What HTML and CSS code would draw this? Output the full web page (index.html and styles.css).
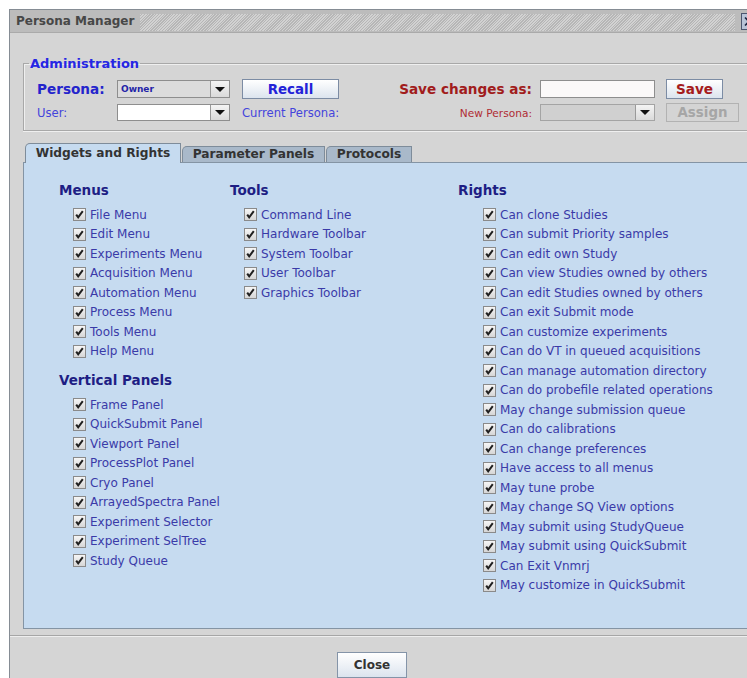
FILE: index.html
```html
<!DOCTYPE html>
<html>
<head>
<meta charset="utf-8">
<title>Persona Manager</title>
<link rel="stylesheet" href="styles.css">
</head>
<body>
<div class="window">
  <div class="titlebar">
    <span class="title">Persona Manager</span>
    <span class="grip"></span>
    <span class="xbtn"><svg width="12" height="13" viewBox="0 0 12 13"><path d="M2 2.5l8 8M10 2.5l-8 8" stroke="#1c2440" stroke-width="1.6" fill="none"/></svg></span>
  </div>

  <div class="content">
    <fieldset class="admin">
      <legend>Administration</legend>
      <div class="admin-grid">
        <span class="lbl-big blue r1 c1">Persona:</span>
        <span class="combo combo-grey r1 c2"><span class="combo-text">Owner</span><span class="arrow"></span></span>
        <button class="btn btn-blue r1 c4">Recall</button>
        <span class="lbl-big red r1 c5 right">Save changes as:</span>
        <span class="field r1 c7"></span>
        <button class="btn btn-red btn-save r1 c9">Save</button>

        <span class="lbl-small blue-light r2 c1">User:</span>
        <span class="combo combo-small r2 c2"><span class="combo-text"></span><span class="arrow"></span></span>
        <span class="lbl-small blue-light r2 c4 span2">Current Persona:</span>
        <span class="lbl-small red-light r2 c5 right">New Persona:</span>
        <span class="combo combo-small combo-off r2 c7"><span class="combo-text"></span><span class="arrow"></span></span>
        <button class="btn btn-off r2 c9">Assign</button>
      </div>
    </fieldset>

    <div class="tabs">
      <div class="tab active tab-w">Widgets and Rights</div>
      <div class="tab tab-p">Parameter Panels</div>
      <div class="tab tab-pr">Protocols</div>
    </div>

    <div class="panel">
      <div class="col">
        <h3>Menus</h3>
        <ul class="list">
          <li><span class="cb"></span>File Menu</li>
          <li><span class="cb"></span>Edit Menu</li>
          <li><span class="cb"></span>Experiments Menu</li>
          <li><span class="cb"></span>Acquisition Menu</li>
          <li><span class="cb"></span>Automation Menu</li>
          <li><span class="cb"></span>Process Menu</li>
          <li><span class="cb"></span>Tools Menu</li>
          <li><span class="cb"></span>Help Menu</li>
        </ul>
        <h3 class="second">Vertical Panels</h3>
        <ul class="list">
          <li><span class="cb"></span>Frame Panel</li>
          <li><span class="cb"></span>QuickSubmit Panel</li>
          <li><span class="cb"></span>Viewport Panel</li>
          <li><span class="cb"></span>ProcessPlot Panel</li>
          <li><span class="cb"></span>Cryo Panel</li>
          <li><span class="cb"></span>ArrayedSpectra Panel</li>
          <li><span class="cb"></span>Experiment Selector</li>
          <li><span class="cb"></span>Experiment SelTree</li>
          <li><span class="cb"></span>Study Queue</li>
        </ul>
      </div>

      <div class="col">
        <h3>Tools</h3>
        <ul class="list">
          <li><span class="cb"></span>Command Line</li>
          <li><span class="cb"></span>Hardware Toolbar</li>
          <li><span class="cb"></span>System Toolbar</li>
          <li><span class="cb"></span>User Toolbar</li>
          <li><span class="cb"></span>Graphics Toolbar</li>
        </ul>
      </div>

      <div class="col">
        <h3>Rights</h3>
        <ul class="list list-wide">
          <li><span class="cb"></span>Can clone Studies</li>
          <li><span class="cb"></span>Can submit Priority samples</li>
          <li><span class="cb"></span>Can edit own Study</li>
          <li><span class="cb"></span>Can view Studies owned by others</li>
          <li><span class="cb"></span>Can edit Studies owned by others</li>
          <li><span class="cb"></span>Can exit Submit mode</li>
          <li><span class="cb"></span>Can customize experiments</li>
          <li><span class="cb"></span>Can do VT in queued acquisitions</li>
          <li><span class="cb"></span>Can manage automation directory</li>
          <li><span class="cb"></span>Can do probefile related operations</li>
          <li><span class="cb"></span>May change submission queue</li>
          <li><span class="cb"></span>Can do calibrations</li>
          <li><span class="cb"></span>Can change preferences</li>
          <li><span class="cb"></span>Have access to all menus</li>
          <li><span class="cb"></span>May tune probe</li>
          <li><span class="cb"></span>May change SQ View options</li>
          <li><span class="cb"></span>May submit using StudyQueue</li>
          <li><span class="cb"></span>May submit using QuickSubmit</li>
          <li><span class="cb"></span>Can Exit Vnmrj</li>
          <li><span class="cb"></span>May customize in QuickSubmit</li>
        </ul>
      </div>
    </div>
  </div>

  <div class="footer">
    <button class="btn btn-close">Close</button>
  </div>
</div>
</body>
</html>
```

FILE: styles.css
```css
html, body {
  margin: 0;
  padding: 0;
}

body {
  width: 747px;
  height: 678px;
  overflow: hidden;
  background: #ffffff;
  font-family: "DejaVu Sans", Verdana, sans-serif;
}

/* dialog frame */
.window {
  margin: 9px 0 0 9px;
  width: 760px;
  height: 700px;
  box-sizing: border-box;
  border: 1px solid #858c94;
  border-right: none;
  background: #d5d5d5;
  display: flex;
  flex-direction: column;
}

.titlebar {
  height: 22px;
  flex: none;
  display: flex;
  align-items: center;
  padding-left: 6px;
  background: #bcbcbc;
  border-bottom: 1px solid #aaaaaa;
}

.title {
  font-weight: bold;
  font-size: 12px;
  color: #474747;
}

.grip {
  flex: 1;
  height: 17px;
  margin: 2px 6px 0 6px;
  background: repeating-linear-gradient(135deg, #d2d2d2 0 1px, #b6b6b6 1px 2px);
}

.xbtn {
  width: 14px;
  height: 15px;
  margin-right: 12px;
  border: 1px solid #4c5670;
  background: #b8c4d8;
  display: flex;
  align-items: center;
  justify-content: center;
}

.content {
  padding: 0 0 0 13px;
}

/* Administration group */
.admin {
  margin: 23px 0 0 0;
  padding: 0 0 8px 0;
  border: 1px solid #a8a8a8;
  border-right: none;
  box-shadow: inset 1px 1px 0 #efefef, 0 1px 0 #efefef;
}

.admin legend {
  margin-left: 5px;
  padding: 0 1px;
  font-weight: bold;
  font-size: 13px;
  color: #2626e4;
}

.admin-grid {
  margin: 8px 0 0 13px;
  display: grid;
  grid-template-columns: 80px 113px 12px 97px 193px 8px 115px 11px 73px;
  grid-template-rows: 20px 19px;
  row-gap: 4px;
  align-items: center;
}

.r1 { grid-row: 1; }
.r2 { grid-row: 2; }
.c1 { grid-column: 1; }
.c2 { grid-column: 2; }
.c4 { grid-column: 4; }
.c5 { grid-column: 5; }
.c7 { grid-column: 7; }
.c9 { grid-column: 9; }
.span2 { grid-column: 4 / span 2; }
.right { justify-self: end; }

.lbl-big {
  font-weight: bold;
  font-size: 13.6px;
}

.lbl-small {
  font-size: 11.6px;
}

.blue { color: #2424cc; }
.blue-light { color: #4444dc; }
.red { color: #a11c1c; }
.red-light { color: #b02c34; font-size: 10.6px; }

/* combo boxes */
.combo {
  display: flex;
  height: 18px;
  box-sizing: border-box;
  border: 1px solid #8e8e8e;
  background: #ffffff;
}

.combo-grey { background: #dcdcdc; }
.combo-small { height: 17px; }
.combo-off { background: #d0d0d0; border-color: #a4a4a4; }

.combo-text {
  flex: 1;
  padding-left: 3px;
  font-weight: bold;
  font-size: 9px;
  line-height: 16px;
  color: #2424a8;
}

.arrow {
  width: 18px;
  border-left: 1px solid #9a9a9a;
  background: linear-gradient(#f4f4f4, #dadada);
  display: flex;
  align-items: center;
  justify-content: center;
}

.arrow::before {
  content: "";
  border-left: 5px solid transparent;
  border-right: 5px solid transparent;
  border-top: 5px solid #111111;
}

.field {
  height: 18px;
  box-sizing: border-box;
  border: 1px solid #8e8e8e;
  background: #fbf9f9;
}

/* buttons */
.btn {
  box-sizing: border-box;
  padding: 0;
  margin: 0;
  font-family: "DejaVu Sans", Verdana, sans-serif;
  font-weight: bold;
  border: 1px solid #7c8ca4;
  background: linear-gradient(#ffffff, #dce4ee);
  cursor: default;
}

.btn-blue {
  width: 97px;
  height: 20px;
  font-size: 13.4px;
  color: #2222d8;
}

.btn-red {
  height: 20px;
  font-size: 13.6px;
  color: #a51c1c;
}

.btn-save { width: 57px; }

.btn-off {
  width: 73px;
  height: 19px;
  font-size: 13.4px;
  color: #a6a6a6;
  background: #d4d4d4;
  border-color: #b2b2b2;
}

/* tabs */
.tabs {
  display: flex;
  align-items: flex-end;
  height: 19px;
  margin: 12px 0 0 2px;
}

.tab {
  height: 16px;
  box-sizing: border-box;
  border: 1px solid #7e8c9a;
  border-bottom: none;
  border-top-left-radius: 5px;
  background: #a9b9ca;
  font-weight: bold;
  font-size: 12.2px;
  line-height: 15px;
  text-align: center;
  color: #333333;
  margin-right: 1px;
}

.tab.active {
  height: 20px;
  margin-bottom: -1px;
  background: #c6dbf0;
  line-height: 19px;
  position: relative;
  z-index: 1;
}

.tab-w { width: 156px; }
.tab-p { width: 143px; }
.tab-pr { width: 86px; }

/* tab page */
.panel {
  height: 467px;
  box-sizing: border-box;
  border: 1px solid #8494a4;
  border-right: none;
  background: #c6dbf0;
  display: grid;
  grid-template-columns: 171px 228px 1fr;
  align-items: start;
  padding: 19px 0 0 35px;
}

.col h3 {
  margin: 0 0 7px 0;
  height: 16px;
  line-height: 16px;
  font-size: 13.5px;
  font-weight: bold;
  color: #1e1e84;
}

.col h3.second {
  margin-top: 11px;
}

.list {
  list-style: none;
  margin: 0;
  padding: 0 0 0 14px;
}

.list-wide {
  padding-left: 25px;
}

.list li {
  height: 19.5px;
  display: flex;
  align-items: center;
  font-size: 12px;
  color: #3a3aa8;
}

.cb {
  width: 13px;
  height: 13px;
  box-sizing: border-box;
  margin-right: 4px;
  border: 1px solid #8a8a8a;
  background:
    url("data:image/svg+xml,%3Csvg xmlns='http://www.w3.org/2000/svg' width='11' height='11'%3E%3Cpath d='M2.2 5.6l2 2.8L8.8 2.2' fill='none' stroke='%23202020' stroke-width='2'/%3E%3C/svg%3E") no-repeat center,
    linear-gradient(#f6f6f6, #d6d6d6);
}

/* bottom button bar */
.footer {
  margin-top: 6px;
  border-top: 1px solid #a6a6a6;
  box-shadow: inset 0 1px 0 #eeeeee;
  padding: 16px 0 0 327px;
}

.btn-close {
  width: 70px;
  height: 26px;
  font-size: 12px;
  color: #333333;
  border-color: #8494a8;
}
```
